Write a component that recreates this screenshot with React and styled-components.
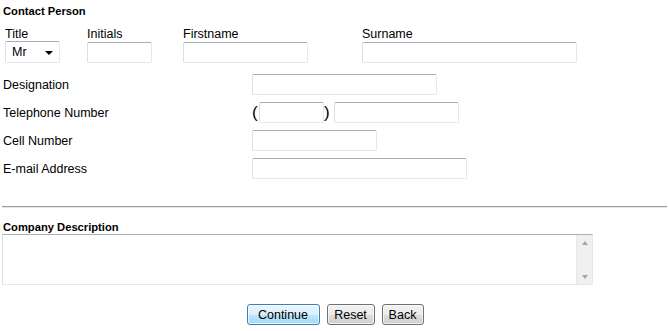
import React from 'react';
import styled, { createGlobalStyle } from 'styled-components';

const GlobalStyle = createGlobalStyle`
  html, body {
    margin: 0;
    padding: 0;
    background: #ffffff;
  }
  body {
    font-family: "Liberation Sans", Arial, sans-serif;
    color: #000000;
  }
`;

const Page = styled.form`
  width: 670px;
  padding: 4px 3px 0 2px;
  box-sizing: border-box;
`;

const SectionTitle = styled.div`
  font-size: 11.2px;
  font-weight: bold;
  line-height: 14px;
  padding-left: 1px;
  margin-top: ${(p) => p.$top || 0}px;
`;

const TopRow = styled.div`
  display: flex;
  margin-top: 8px;
  padding-left: 3px;
`;

const Field = styled.div`
  display: flex;
  flex-direction: column;
  width: ${(p) => p.$width}px;
  flex: none;
`;

const FieldLabel = styled.span`
  font-size: 12.5px;
  line-height: 16px;
  height: 15px;
`;

const TextInput = styled.input`
  box-sizing: border-box;
  width: ${(p) => p.$width}px;
  height: 21px;
  margin: ${(p) => (p.$offset ? '1px 0 0' : '0')};
  margin-left: ${(p) => p.$gap || 0}px;
  padding: 2px 3px;
  border: 1px solid #e3e9ef;
  border-top-color: #abadb3;
  border-left-color: #dbdfe6;
  border-radius: 2px;
  background: #ffffff;
  font-family: inherit;
  font-size: 12.5px;
  outline: none;
`;

const SelectBox = styled.div`
  box-sizing: border-box;
  width: 55px;
  height: 22px;
  display: flex;
  align-items: center;
  justify-content: space-between;
  padding: 0 6px 0 6px;
  border: 1px solid #e3e9ef;
  border-top-color: #abadb3;
  border-left-color: #dbdfe6;
  border-radius: 2px;
  font-size: 12.5px;
`;

const Caret = styled.span`
  width: 0;
  height: 0;
  border-left: 4px solid transparent;
  border-right: 4px solid transparent;
  border-top: 4px solid #000000;
  margin-top: 1px;
`;

const Rows = styled.div`
  margin-top: 7px;
  display: flex;
  flex-direction: column;
`;

const Row = styled.div`
  display: flex;
  align-items: center;
  height: 28px;
  padding-left: 1px;
`;

const RowLabel = styled.span`
  width: 249px;
  flex: none;
  font-size: 12.5px;
  padding-top: 1px;
`;

const Paren = styled.span`
  font-size: 17px;
  line-height: 21px;
  width: 7px;
  flex: none;
  color: #000000;
`;

const PhoneGroup = styled.div`
  display: flex;
  align-items: center;
`;

const Divider = styled.hr`
  margin: 24px 0 0;
  border: 0;
  border-top: 1px solid #9c9c9c;
  border-bottom: 1px solid #e6e6e6;
  height: 0;
`;

const AreaFrame = styled.div`
  box-sizing: border-box;
  width: 591px;
  height: 51px;
  display: flex;
  border: 1px solid #e3e9ef;
  border-top-color: #abadb3;
  border-left-color: #dbdfe6;
`;

const TextArea = styled.textarea`
  flex: 1;
  border: 0;
  resize: none;
  outline: none;
  padding: 2px;
  font-family: inherit;
  font-size: 12.5px;
`;

const ScrollTrack = styled.div`
  width: 16px;
  flex: none;
  background: #f0f0f0;
  border-left: 1px solid #e8e8e8;
  display: flex;
  flex-direction: column;
  justify-content: space-between;
  align-items: center;
  padding: 6px 0 5px;
  box-sizing: border-box;
`;

const Arrow = styled.span`
  width: 0;
  height: 0;
  border-left: 3.5px solid transparent;
  border-right: 3.5px solid transparent;
  ${(p) => (p.$up ? 'border-bottom: 4px solid #a6a6a6;' : 'border-top: 4px solid #a6a6a6;')}
`;

const ButtonBar = styled.div`
  display: flex;
  justify-content: center;
  gap: 7px;
  margin-top: 19px;
  padding-left: 1px;
`;

const Button = styled.button`
  box-sizing: border-box;
  width: ${(p) => p.$width}px;
  height: 21px;
  padding: 0;
  font-family: inherit;
  font-size: 12.5px;
  color: #000000;
  border-radius: 3px;
  border: 1px solid ${(p) => (p.$primary ? '#3c7fb1' : '#707070')};
  background: ${(p) =>
    p.$primary
      ? 'linear-gradient(#eaf6fd 0%, #d9f0fc 50%, #bee6fd 51%, #a7d9f5 100%)'
      : 'linear-gradient(#f2f2f2 0%, #ebebeb 50%, #dddddd 51%, #cfcfcf 100%)'};
  box-shadow: inset 0 0 0 1px rgba(255, 255, 255, 0.7);
`;

export default function App() {
  return (
    <>
      <GlobalStyle />
      <Page onSubmit={(e) => e.preventDefault()}>
        <SectionTitle>Contact Person</SectionTitle>
        <TopRow>
          <Field $width={82}>
            <FieldLabel>Title</FieldLabel>
            <SelectBox>
              <span>Mr</span>
              <Caret />
            </SelectBox>
          </Field>
          <Field $width={96}>
            <FieldLabel>Initials</FieldLabel>
            <TextInput $width={65} $offset />
          </Field>
          <Field $width={179}>
            <FieldLabel>Firstname</FieldLabel>
            <TextInput $width={125} $offset />
          </Field>
          <Field $width={220}>
            <FieldLabel>Surname</FieldLabel>
            <TextInput $width={215} $offset />
          </Field>
        </TopRow>

        <Rows>
          <Row>
            <RowLabel>Designation</RowLabel>
            <TextInput $width={185} />
          </Row>
          <Row>
            <RowLabel>Telephone Number</RowLabel>
            <PhoneGroup>
              <Paren>(</Paren>
              <TextInput $width={65} />
              <Paren>)</Paren>
              <TextInput $width={125} $gap={3} />
            </PhoneGroup>
          </Row>
          <Row>
            <RowLabel>Cell Number</RowLabel>
            <TextInput $width={125} />
          </Row>
          <Row>
            <RowLabel>E-mail Address</RowLabel>
            <TextInput $width={215} />
          </Row>
        </Rows>

        <Divider />

        <SectionTitle $top={12}>Company Description</SectionTitle>
        <AreaFrame>
          <TextArea />
          <ScrollTrack>
            <Arrow $up />
            <Arrow />
          </ScrollTrack>
        </AreaFrame>

        <ButtonBar>
          <Button $primary $width={73}>Continue</Button>
          <Button $width={48}>Reset</Button>
          <Button $width={42}>Back</Button>
        </ButtonBar>
      </Page>
    </>
  );
}
